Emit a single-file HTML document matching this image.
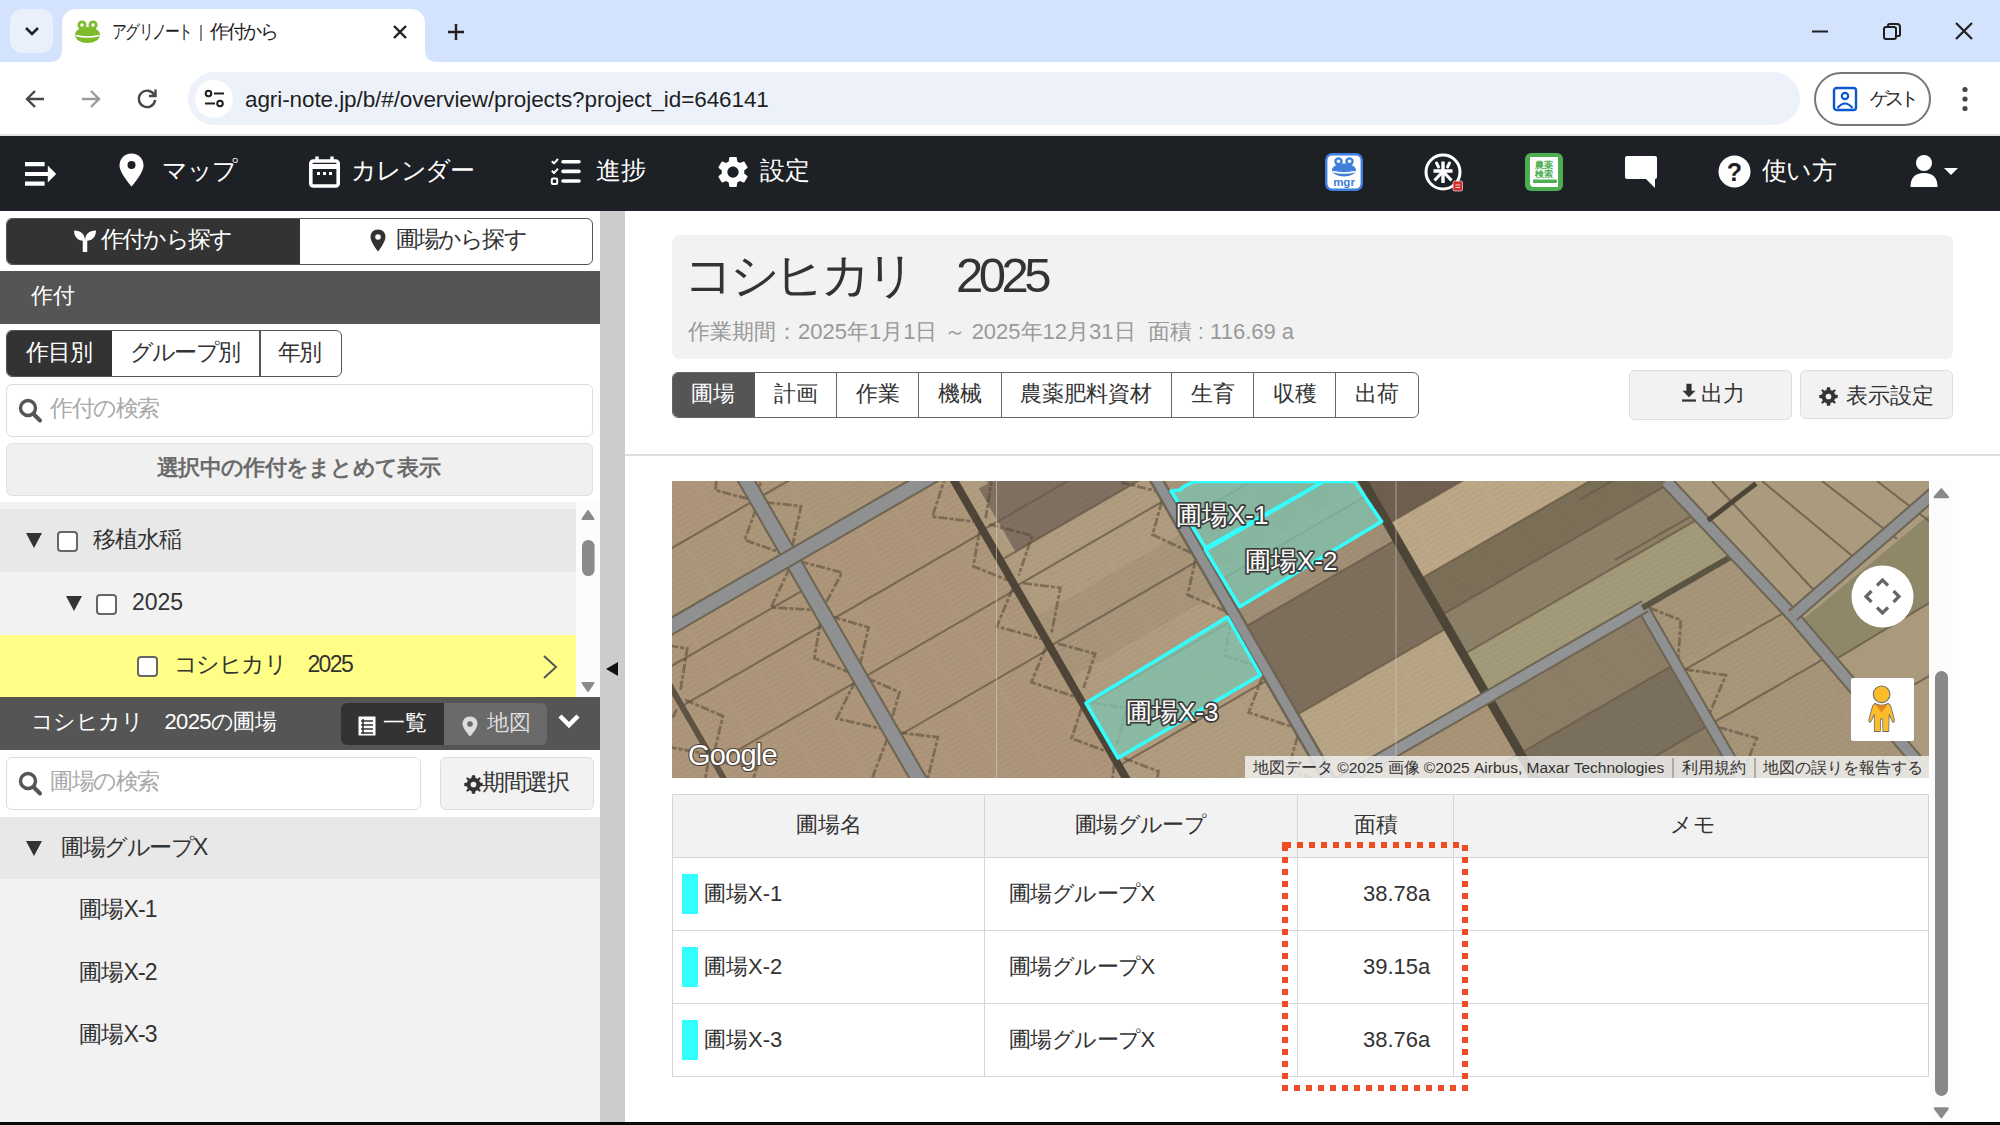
<!DOCTYPE html>
<html><head><meta charset="utf-8">
<style>
*{box-sizing:border-box;margin:0;padding:0}
html,body{width:2000px;height:1125px;overflow:hidden;background:#fff}
body{position:relative;font-family:"Liberation Sans",sans-serif;color:#333}
.a{position:absolute}
.t{position:absolute;white-space:nowrap;line-height:1}
svg{position:absolute;overflow:visible}
</style></head><body>

<!-- ============ CHROME TAB STRIP ============ -->
<div class="a" style="left:0;top:0;width:2000px;height:62px;background:#d3e3fd"></div>
<div class="a" style="left:10px;top:9px;width:43px;height:44px;border-radius:12px;background:#e9f0fc"></div>
<svg style="left:24px;top:25px" width="16" height="12"><path d="M2 3 L8 9 L14 3" stroke="#1f1f1f" stroke-width="2.6" fill="none"/></svg>
<!-- active tab -->
<div class="a" style="left:62px;top:9px;width:363px;height:60px;border-radius:14px 14px 0 0;background:#fff"></div>
<svg style="left:0;top:50px" width="500" height="14"><path d="M50 12 Q62 12 62 0 L62 12 Z" fill="#fff"/><path d="M437 12 Q425 12 425 0 L425 12 Z" fill="#fff"/></svg>
<!-- frog favicon -->
<svg style="left:74px;top:20px" width="28" height="24" viewBox="0 0 28 24">
<circle cx="8" cy="5" r="4.5" fill="#7dbb2a"/><circle cx="19" cy="5" r="4.5" fill="#7dbb2a"/>
<circle cx="8" cy="5" r="1.8" fill="#fff"/><circle cx="19" cy="5" r="1.8" fill="#fff"/>
<ellipse cx="13.5" cy="15" rx="12.5" ry="8" fill="#7dbb2a"/>
<path d="M1.5 15.5 Q13.5 18.5 25.5 15.5" stroke="#fff" stroke-width="1.6" fill="none"/>
</svg>
<div class="t" style="left:112px;top:22px;font-size:19px;color:#1f1f1f;letter-spacing:-2px;transform:scaleX(0.78);transform-origin:0 0">アグリノート</div>
<div class="a" style="left:200px;top:25px;width:1.5px;height:16px;background:#8a8a8a"></div>
<div class="t" style="left:210px;top:22px;font-size:19px;color:#1f1f1f;letter-spacing:-2.4px">作付から</div>
<svg style="left:392px;top:24px" width="16" height="16"><path d="M2 2 L14 14 M14 2 L2 14" stroke="#1f1f1f" stroke-width="2.4"/></svg>
<svg style="left:446px;top:22px" width="20" height="20"><path d="M10 2 V18 M2 10 H18" stroke="#1f1f1f" stroke-width="2.4"/></svg>
<!-- window controls -->
<svg style="left:1810px;top:22px" width="20" height="20"><path d="M2 9.5 H18" stroke="#1f1f1f" stroke-width="2"/></svg>
<svg style="left:1881px;top:21px" width="22" height="22"><rect x="3" y="6" width="12" height="12" rx="2" stroke="#1f1f1f" stroke-width="2" fill="none"/><path d="M7 6 V4.5 Q7 3 8.5 3 H16 Q19 3 19 6 V13.5 Q19 15 17.5 15 H15" stroke="#1f1f1f" stroke-width="2" fill="none"/></svg>
<svg style="left:1953px;top:20px" width="22" height="22"><path d="M3 3 L19 19 M19 3 L3 19" stroke="#1f1f1f" stroke-width="2.2"/></svg>

<!-- ============ TOOLBAR ============ -->
<div class="a" style="left:0;top:62px;width:2000px;height:73px;background:#fff;border-radius:14px 14px 0 0"></div>
<div class="a" style="left:0;top:134px;width:2000px;height:2px;background:#e3e3e3"></div>
<svg style="left:24px;top:88px" width="22" height="22"><path d="M20 11 H3 M11 3 L3 11 L11 19" stroke="#474747" stroke-width="2.4" fill="none"/></svg>
<svg style="left:80px;top:88px" width="22" height="22"><path d="M2 11 H19 M11 3 L19 11 L11 19" stroke="#9a9a9a" stroke-width="2.4" fill="none"/></svg>
<svg style="left:136px;top:88px" width="22" height="22"><path d="M18.2 6.8 A8.2 8.2 0 1 0 19.2 12" stroke="#474747" stroke-width="2.4" fill="none"/><path d="M19.5 1.5 V8 H13" stroke="#474747" stroke-width="2.4" fill="none"/></svg>
<div class="a" style="left:188px;top:72px;width:1612px;height:53px;border-radius:27px;background:#edf2fa"></div>
<div class="a" style="left:195px;top:80px;width:38px;height:38px;border-radius:19px;background:#fff"></div>
<svg style="left:204px;top:89px" width="22" height="20"><circle cx="4.5" cy="4.5" r="2.8" stroke="#1f1f1f" stroke-width="2" fill="none"/><path d="M10 4.5 H20" stroke="#1f1f1f" stroke-width="2"/><circle cx="16" cy="14.5" r="2.8" stroke="#1f1f1f" stroke-width="2" fill="none"/><path d="M1 14.5 H11" stroke="#1f1f1f" stroke-width="2"/></svg>
<div class="t" style="left:245px;top:89px;font-size:22.5px;color:#1f1f1f;letter-spacing:-0.09px">agri-note.jp/b/#/overview/projects?project_id=646141</div>
<!-- guest -->
<div class="a" style="left:1814px;top:72px;width:117px;height:54px;border-radius:27px;border:2px solid #747775;background:#fff"></div>
<svg style="left:1832px;top:86px" width="26" height="26"><rect x="2" y="2" width="22" height="22" rx="2.5" stroke="#0b57d0" stroke-width="2.4" fill="none"/><circle cx="13" cy="10" r="3.2" stroke="#0b57d0" stroke-width="2.2" fill="none"/><path d="M5.5 22 Q13 13 20.5 22" stroke="#0b57d0" stroke-width="2.2" fill="none"/></svg>
<div class="t" style="left:1870px;top:89px;font-size:19px;color:#1f1f1f;letter-spacing:-3.8px">ゲスト</div>
<svg style="left:1960px;top:86px" width="10" height="26"><circle cx="5" cy="3.5" r="2.6" fill="#474747"/><circle cx="5" cy="13" r="2.6" fill="#474747"/><circle cx="5" cy="22.5" r="2.6" fill="#474747"/></svg>

<!-- ============ NAVBAR ============ -->
<div class="a" id="nav" style="left:0;top:136px;width:2000px;height:75px;background:#1d2024"></div>
<svg style="left:24px;top:160px" width="34" height="28"><path d="M1 4.2 H20.6 M1 14 H25 M1 23.6 H20.6" stroke="#fff" stroke-width="4.2"/><path d="M23.8 5.4 L32.2 14 L23.8 22.6 Z" fill="#fff"/></svg>
<svg style="left:119px;top:153px" width="25" height="34" viewBox="0 0 25 34"><path d="M12.5 0.5 C5.5 0.5 0.5 5.5 0.5 12.5 C0.5 20 12.5 33.5 12.5 33.5 C12.5 33.5 24.5 20 24.5 12.5 C24.5 5.5 19.5 0.5 12.5 0.5 Z" fill="#fff"/><circle cx="12.5" cy="12" r="4" fill="#1d2024"/></svg>
<div class="t" style="left:162px;top:158px;font-size:25px;color:#fff;letter-spacing:-1px">マップ</div>
<svg style="left:309px;top:156px" width="31" height="32" viewBox="0 0 31 32"><rect x="1.8" y="5" width="27.4" height="25" rx="2.5" stroke="#fff" stroke-width="3.6" fill="none"/><path d="M1.8 10.5 H29.2" stroke="#fff" stroke-width="5"/><path d="M8 0.5 V6 M23 0.5 V6" stroke="#fff" stroke-width="3.4"/><rect x="8" y="16" width="3" height="3" fill="#fff"/><rect x="14" y="16" width="3" height="3" fill="#fff"/><rect x="20" y="16" width="3" height="3" fill="#fff"/></svg>
<div class="t" style="left:351px;top:158px;font-size:25px;color:#fff;letter-spacing:-1.2px">カレンダー</div>
<svg style="left:550px;top:157px" width="32" height="30" viewBox="0 0 32 30"><path d="M1.8 4.2 L4 6.4 L8 2" stroke="#fff" stroke-width="2" fill="none"/><path d="M1.8 13.8 L4 16 L8 11.6" stroke="#fff" stroke-width="2" fill="none"/><rect x="1.8" y="21.6" width="5.4" height="5.4" rx="1.2" stroke="#fff" stroke-width="2" fill="none"/><path d="M13 4.8 H29 M13 14.4 H29 M13 24 H29" stroke="#fff" stroke-width="3.6" stroke-linecap="round"/></svg>
<div class="t" style="left:596px;top:158px;font-size:25px;color:#fff">進捗</div>
<svg style="left:718px;top:157px" width="30" height="30" viewBox="2.4 2.4 19.2 19.2"><path d="M19.14,12.94c0.04-0.3,0.06-0.61,0.06-0.94c0-0.32-0.02-0.64-0.07-0.94l2.03-1.58c0.18-0.14,0.23-0.41,0.12-0.61 l-1.92-3.32c-0.12-0.22-0.37-0.29-0.59-0.22l-2.39,0.96c-0.5-0.38-1.030-0.7-1.62-0.94L14.4,2.81c-0.04-0.24-0.24-0.41-0.48-0.41 h-3.84c-0.24,0-0.43,0.17-0.47,0.41L9.25,5.35C8.66,5.59,8.12,5.92,7.63,6.29L5.24,5.33c-0.22-0.08-0.47,0-0.59,0.22L2.74,8.87 C2.62,9.08,2.66,9.34,2.86,9.48l2.03,1.58C4.84,11.36,4.8,11.69,4.8,12s0.02,0.64,0.07,0.94l-2.03,1.58 c-0.18,0.14-0.23,0.41-0.12,0.61l1.92,3.32c0.12,0.22,0.37,0.29,0.59,0.22l2.39-0.96c0.5,0.38,1.03,0.7,1.62,0.94l0.36,2.54 c0.05,0.24,0.24,0.41,0.48,0.41h3.84c0.24,0,0.44-0.17,0.47-0.41l0.36-2.54c0.59-0.24,1.13-0.56,1.62-0.94l2.39,0.96 c0.22,0.08,0.47,0,0.59-0.22l1.92-3.32c0.12-0.22,0.07-0.47-0.12-0.61L19.14,12.94z M12,15.6c-1.98,0-3.6-1.62-3.6-3.6 s1.62-3.6,3.6-3.6s3.6,1.62,3.6,3.6S13.98,15.6,12,15.6z" fill="#fff" fill-rule="evenodd"/></svg>
<div class="t" style="left:760px;top:158px;font-size:25px;color:#fff">設定</div>

<!-- right icons -->
<svg style="left:1325px;top:153px" width="38" height="38" viewBox="0 0 38 38"><rect x="1.2" y="1.2" width="35.6" height="35.6" rx="6" fill="#fff" stroke="#3d7fd9" stroke-width="2.4"/>
<circle cx="13.5" cy="8.5" r="4.2" fill="#3d7fd9"/><circle cx="24.5" cy="8.5" r="4.2" fill="#3d7fd9"/><circle cx="13.5" cy="8.3" r="1.7" fill="#fff"/><circle cx="24.5" cy="8.3" r="1.7" fill="#fff"/>
<ellipse cx="19" cy="17" rx="12" ry="6.5" fill="#3d7fd9"/><path d="M7.5 18.5 Q19 21.5 30.5 18.5" stroke="#fff" stroke-width="1.6" fill="none"/>
<text x="19" y="32.5" font-size="11.5" font-weight="bold" fill="#3d7fd9" text-anchor="middle" font-family="Liberation Sans">mgr</text></svg>
<svg style="left:1424px;top:153px" width="40" height="40" viewBox="0 0 40 40"><circle cx="19" cy="19" r="17" stroke="#fff" stroke-width="3" fill="#1d2024"/>
<path d="M19 8.5 V30 M9.5 18 H28.5" stroke="#fff" stroke-width="3.4"/><path d="M12.5 10 L14.5 14 M25.5 10 L23.5 14" stroke="#fff" stroke-width="3" stroke-linecap="round"/><path d="M18 19.5 L10.5 27.5 M20 19.5 L27.5 27.5" stroke="#fff" stroke-width="3.2"/>
<rect x="29" y="28" width="9.5" height="10" rx="1.5" fill="#d32f2f" stroke="#fff" stroke-width="0.6"/><path d="M31.5 32 H36 M31.5 34.5 H36" stroke="#fff" stroke-width="0.8"/></svg>
<svg style="left:1525px;top:153px" width="38" height="38" viewBox="0 0 38 38"><rect x="0" y="0" width="38" height="38" rx="6" fill="#4caf50"/>
<path d="M5 4 H33 V34 H9 Q5 34 5 30 Z" fill="#fff"/><rect x="8" y="26.5" width="24" height="3.6" rx="1" fill="#4caf50"/>
<text x="19" y="14.5" font-size="9" font-weight="bold" fill="#4caf50" text-anchor="middle">農薬</text><text x="19" y="24" font-size="9" font-weight="bold" fill="#4caf50" text-anchor="middle">検索</text></svg>
<svg style="left:1624px;top:155px" width="34" height="34" viewBox="0 0 34 34"><path d="M3 1 H31 Q33 1 33 3 V22 Q33 24 31 24 V33 L22 24 H3 Q1 24 1 22 V3 Q1 1 3 1 Z" fill="#fff"/></svg>
<svg style="left:1718px;top:155px" width="33" height="33" viewBox="0 0 33 33"><circle cx="16.5" cy="16.5" r="16" fill="#fff"/><text x="16.5" y="26" font-size="25" font-weight="bold" fill="#1d2024" text-anchor="middle" font-family="Liberation Sans">?</text></svg>
<div class="t" style="left:1762px;top:158px;font-size:25px;color:#fff;letter-spacing:-0.7px">使い方</div>
<svg style="left:1910px;top:154px" width="50" height="34" viewBox="0 0 50 34"><circle cx="14" cy="9" r="8" fill="#fff"/><path d="M0.5 33 Q0.5 19 14 19 Q27.5 19 27.5 33 Z" fill="#fff"/><path d="M34 14 L48 14 L41 21 Z" fill="#fff"/></svg>


<!-- ============ LEFT PANEL ============ -->
<div class="a" style="left:0;top:211px;width:600px;height:914px;background:#fff"></div>
<!-- toggle -->
<div class="a" style="left:6px;top:218px;width:587px;height:47px;border:1.5px solid #555;border-radius:6px;background:#fff;overflow:hidden">
  <div class="a" style="left:0;top:0;width:293px;height:100%;background:#333"></div>
</div>
<svg style="left:73px;top:228px" width="24" height="25" viewBox="0 0 24 25"><path d="M12 24 V12" stroke="#fff" stroke-width="4.5"/><path d="M12 13 C12 6 8 2.5 1 2.5 C1 9 5 13 12 13 Z" fill="#fff"/><path d="M12 13 C12 6 16 2.5 23 2.5 C23 9 19 13 12 13 Z" fill="#fff"/></svg>
<div class="t" style="left:101px;top:228px;font-size:23px;color:#fff;letter-spacing:-1.8px">作付から探す</div>
<svg style="left:370px;top:229px" width="16" height="23" viewBox="0 0 16 23"><path d="M8 0.5 C3.5 0.5 0.5 3.5 0.5 8 C0.5 13 8 22.5 8 22.5 C8 22.5 15.5 13 15.5 8 C15.5 3.5 12.5 0.5 8 0.5 Z" fill="#333"/><circle cx="8" cy="8" r="2.8" fill="#fff"/></svg>
<div class="t" style="left:396px;top:228px;font-size:23px;color:#333;letter-spacing:-1.9px">圃場から探す</div>

<!-- header 作付 -->
<div class="a" style="left:0;top:271px;width:600px;height:53px;background:#555"></div>
<div class="t" style="left:31px;top:285px;font-size:22px;color:#fff">作付</div>

<!-- segmented -->
<div class="a" style="left:6px;top:330px;width:336px;height:47px;border:1.5px solid #555;border-radius:6px;background:#fff;overflow:hidden">
  <div class="a" style="left:0;top:0;width:105px;height:100%;background:#333"></div>
  <div class="a" style="left:252px;top:0;width:1.5px;height:100%;background:#555"></div>
</div>
<div class="t" style="left:26px;top:341px;font-size:23px;color:#fff;letter-spacing:-1.1px">作目別</div>
<div class="t" style="left:130px;top:341px;font-size:23px;color:#333;letter-spacing:-1.8px">グループ別</div>
<div class="t" style="left:278px;top:341px;font-size:23px;color:#333;letter-spacing:-2px">年別</div>

<!-- search -->
<div class="a" style="left:6px;top:384px;width:587px;height:53px;border:1.5px solid #ddd;border-radius:6px;background:#fff"></div>
<svg style="left:18px;top:398px" width="24" height="25" viewBox="0 0 24 25"><circle cx="10" cy="10" r="7.5" stroke="#555" stroke-width="3.4" fill="none"/><path d="M15.5 16 L22 22.5" stroke="#555" stroke-width="4" stroke-linecap="round"/></svg>
<div class="t" style="left:50px;top:397px;font-size:23px;color:#aaa;letter-spacing:-1.4px">作付の検索</div>

<!-- gray button -->
<div class="a" style="left:6px;top:443px;width:587px;height:53px;border:1.5px solid #e0e0e0;border-radius:6px;background:#f0f0f0"></div>
<div class="t" style="left:157px;top:457px;font-size:22px;font-weight:bold;color:#6b6b6b;letter-spacing:-0.7px">選択中の作付をまとめて表示</div>

<!-- tree list -->
<div class="a" style="left:0;top:502px;width:600px;height:195px;background:#f2f2f2"></div>
<div class="a" style="left:0;top:509px;width:576px;height:63px;background:#e8e8e8"></div>
<div class="a" style="left:0;top:635px;width:576px;height:62px;background:#ffff88"></div>
<div class="a" style="left:576px;top:502px;width:24px;height:195px;background:#fcfcfc"></div>
<svg style="left:578px;top:506px" width="20" height="190"><path d="M4.5 13 L10 5 L15.5 13 Z" fill="#8a8a8a" stroke="#8a8a8a" stroke-width="2" stroke-linejoin="round"/><rect x="4" y="34" width="12.6" height="36" rx="6.3" fill="#8a8a8a"/><path d="M4.5 177 L10 185 L15.5 177 Z" fill="#8a8a8a" stroke="#8a8a8a" stroke-width="2" stroke-linejoin="round"/></svg>
<svg style="left:25px;top:532px" width="18" height="17"><path d="M1 1 H17 L9 16 Z" fill="#333"/></svg>
<div class="a" style="left:57px;top:531px;width:21px;height:21px;border:2px solid #666;border-radius:4px;background:#fff"></div>
<div class="t" style="left:93px;top:528px;font-size:23px;color:#333;letter-spacing:-1px">移植水稲</div>
<svg style="left:65px;top:595px" width="18" height="17"><path d="M1 1 H17 L9 16 Z" fill="#333"/></svg>
<div class="a" style="left:96px;top:594px;width:21px;height:21px;border:2px solid #666;border-radius:4px;background:#fff"></div>
<div class="t" style="left:132px;top:591px;font-size:23px;color:#333">2025</div>
<div class="a" style="left:137px;top:656px;width:21px;height:21px;border:2px solid #666;border-radius:4px;background:#fff"></div>
<div class="t" style="left:174px;top:653px;font-size:23px;color:#333;letter-spacing:-1.6px">コシヒカリ　2025</div>
<svg style="left:542px;top:654px" width="16" height="26"><path d="M2 2 L14 13 L2 24" stroke="#555" stroke-width="2" fill="none"/></svg>

<!-- header 2 -->
<div class="a" style="left:0;top:697px;width:600px;height:53px;background:#555"></div>
<div class="t" style="left:31px;top:711px;font-size:22px;color:#fff;letter-spacing:-0.6px">コシヒカリ　2025の圃場</div>
<div class="a" style="left:341px;top:703px;width:206px;height:42px;border-radius:6px;background:#6a6a6a;overflow:hidden"><div class="a" style="left:0;top:0;width:103px;height:42px;background:#333"></div></div>
<svg style="left:358px;top:716px" width="18" height="20" viewBox="0 0 18 20"><rect x="0.5" y="0.5" width="17" height="19" fill="#fff"/><path d="M3 5 H15 M3 9 H15 M3 13 H15 M3 17 H15" stroke="#333" stroke-width="1.5"/><path d="M5 3 V18" stroke="#333" stroke-width="1.5"/></svg>
<div class="t" style="left:383px;top:712px;font-size:22px;color:#fff">一覧</div>
<svg style="left:462px;top:716px" width="16" height="21" viewBox="0 0 16 21"><path d="M8 0.5 C3.5 0.5 0.5 3.5 0.5 8 C0.5 12.5 8 20.5 8 20.5 C8 20.5 15.5 12.5 15.5 8 C15.5 3.5 12.5 0.5 8 0.5 Z" fill="#ddd"/><circle cx="8" cy="8" r="2.8" fill="#6a6a6a"/></svg>
<div class="t" style="left:487px;top:712px;font-size:22px;color:#ddd">地図</div>
<svg style="left:558px;top:713px" width="22" height="16"><path d="M2 3 L11 12 L20 3" stroke="#fff" stroke-width="4.5" fill="none"/></svg>

<!-- field search -->
<div class="a" style="left:6px;top:757px;width:415px;height:53px;border:1.5px solid #ddd;border-radius:6px;background:#fff"></div>
<svg style="left:18px;top:771px" width="24" height="25" viewBox="0 0 24 25"><circle cx="10" cy="10" r="7.5" stroke="#555" stroke-width="3.4" fill="none"/><path d="M15.5 16 L22 22.5" stroke="#555" stroke-width="4" stroke-linecap="round"/></svg>
<div class="t" style="left:50px;top:770px;font-size:23px;color:#aaa;letter-spacing:-1.4px">圃場の検索</div>
<div class="a" style="left:440px;top:757px;width:154px;height:53px;border:1.5px solid #ddd;border-radius:6px;background:#f2f2f2"></div>
<svg style="left:464px;top:775px" width="19" height="19" viewBox="-16 -16 32 32"><path d="M-2.6 -15.5 H2.6 L3.4 -11 L6.6 -9.6 L10.4 -12.4 L12.4 -10.4 L9.6 -6.6 L11 -3.4 L15.5 -2.6 V2.6 L11 3.4 L9.6 6.6 L12.4 10.4 L10.4 12.4 L6.6 9.6 L3.4 11 L2.6 15.5 H-2.6 L-3.4 11 L-6.6 9.6 L-10.4 12.4 L-12.4 10.4 L-9.6 6.6 L-11 3.4 L-15.5 2.6 V-2.6 L-11 -3.4 L-9.6 -6.6 L-12.4 -10.4 L-10.4 -12.4 L-6.6 -9.6 L-3.4 -11 Z" fill="#333"/><circle r="4.8" fill="#f2f2f2"/></svg>
<div class="t" style="left:482px;top:771px;font-size:23px;color:#333;letter-spacing:-1.4px">期間選択</div>

<!-- field group -->
<div class="a" style="left:0;top:817px;width:600px;height:308px;background:#f2f2f2"></div>
<div class="a" style="left:0;top:817px;width:600px;height:62px;background:#e8e8e8"></div>
<svg style="left:25px;top:840px" width="18" height="17"><path d="M1 1 H17 L9 16 Z" fill="#333"/></svg>
<div class="t" style="left:61px;top:836px;font-size:23px;color:#333;letter-spacing:-1.5px">圃場グループX</div>
<div class="t" style="left:79px;top:898px;font-size:23px;color:#333;letter-spacing:-0.8px">圃場X-1</div>
<div class="t" style="left:79px;top:961px;font-size:23px;color:#333;letter-spacing:-0.8px">圃場X-2</div>
<div class="t" style="left:79px;top:1023px;font-size:23px;color:#333;letter-spacing:-0.8px">圃場X-3</div>

<!-- gutter -->
<div class="a" style="left:600px;top:211px;width:25px;height:914px;background:#ccc"></div>
<svg style="left:604px;top:661px" width="16" height="16"><path d="M14 1 V15 L2 8 Z" fill="#111"/></svg>


<!-- ============ MAIN ============ -->
<div class="a" style="left:672px;top:235px;width:1281px;height:124px;border-radius:7px;background:#f2f2f2"></div>
<div class="t" style="left:684px;top:251px;font-size:49px;color:#333;letter-spacing:-4.5px">コシヒカリ　2025</div>
<div class="t" style="left:688px;top:321px;font-size:22px;color:#999">作業期間：2025年1月1日 ～ 2025年12月31日&nbsp;&nbsp;面積 : 116.69 a</div>

<!-- tabs -->
<div class="a" style="left:672px;top:372px;width:747px;height:46px;border:1.5px solid #666;border-radius:6px;background:#fff;overflow:hidden">
  <div class="a" style="left:0;top:0;width:82px;height:100%;background:#555"></div>
  <div class="a" style="left:163px;top:0;width:1px;height:100%;background:#666"></div>
  <div class="a" style="left:245px;top:0;width:1px;height:100%;background:#666"></div>
  <div class="a" style="left:328px;top:0;width:1px;height:100%;background:#666"></div>
  <div class="a" style="left:498px;top:0;width:1px;height:100%;background:#666"></div>
  <div class="a" style="left:580px;top:0;width:1px;height:100%;background:#666"></div>
  <div class="a" style="left:662px;top:0;width:1px;height:100%;background:#666"></div>
</div>
<div class="t" style="left:691px;top:383px;font-size:22px;color:#fff">圃場</div>
<div class="t" style="left:774px;top:383px;font-size:22px;color:#333">計画</div>
<div class="t" style="left:856px;top:383px;font-size:22px;color:#333">作業</div>
<div class="t" style="left:938px;top:383px;font-size:22px;color:#333">機械</div>
<div class="t" style="left:1020px;top:383px;font-size:22px;color:#333">農薬肥料資材</div>
<div class="t" style="left:1191px;top:383px;font-size:22px;color:#333">生育</div>
<div class="t" style="left:1273px;top:383px;font-size:22px;color:#333">収穫</div>
<div class="t" style="left:1355px;top:383px;font-size:22px;color:#333">出荷</div>

<!-- right buttons -->
<div class="a" style="left:1629px;top:370px;width:163px;height:50px;border:1.5px solid #ddd;border-radius:6px;background:#f2f2f2"></div>
<svg style="left:1681px;top:383px" width="16" height="19" viewBox="0 0 18 22"><path d="M6 1 H12 V9 H16.5 L9 16.5 L1.5 9 H6 Z" fill="#333"/><rect x="1" y="19" width="16" height="2.6" fill="#333"/></svg>
<div class="t" style="left:1701px;top:383px;font-size:22px;color:#333">出力</div>
<div class="a" style="left:1800px;top:370px;width:153px;height:49px;border:1.5px solid #ddd;border-radius:6px;background:#f2f2f2"></div>
<svg style="left:1819px;top:387px" width="19" height="19" viewBox="-16 -16 32 32"><path d="M-2.6 -15.5 H2.6 L3.4 -11 L6.6 -9.6 L10.4 -12.4 L12.4 -10.4 L9.6 -6.6 L11 -3.4 L15.5 -2.6 V2.6 L11 3.4 L9.6 6.6 L12.4 10.4 L10.4 12.4 L6.6 9.6 L3.4 11 L2.6 15.5 H-2.6 L-3.4 11 L-6.6 9.6 L-10.4 12.4 L-12.4 10.4 L-9.6 6.6 L-11 3.4 L-15.5 2.6 V-2.6 L-11 -3.4 L-9.6 -6.6 L-12.4 -10.4 L-10.4 -12.4 L-6.6 -9.6 L-3.4 -11 Z" fill="#333"/><circle r="4.8" fill="#f2f2f2"/></svg>
<div class="t" style="left:1846px;top:385px;font-size:22px;color:#333">表示設定</div>

<!-- hr -->
<div class="a" style="left:625px;top:454px;width:1375px;height:2px;background:#ddd"></div>

<!-- MAP -->
<div class="a" id="map" style="left:672px;top:481px;width:1257px;height:297px;overflow:hidden;background:#a8977c">
<svg style="left:0;top:0" width="1257" height="297" viewBox="0 0 1257 297">
<defs><clipPath id="mc"><rect width="1257" height="297"/></clipPath>
<pattern id="stripes" width="40" height="5" patternUnits="userSpaceOnUse"><rect width="40" height="5" fill="none"/><path d="M0 1 H18 M22 3.5 H40" stroke="#3d3025" stroke-width="1" opacity="0.35"/></pattern></defs>
<g clip-path="url(#mc)">
<rect width="1257" height="297" fill="#a99378"/>
<g transform="rotate(-30)">
 <!-- col1 / col2 rows -->
 <rect x="-300" y="-100" width="547" height="1000" fill="#ad967a"/>
 <rect x="-300" y="58" width="547" height="67" fill="#ab977a"/>
 <!-- col3 -->
 <rect x="247" y="-100" width="173" height="1000" fill="#b09c7f"/>
 <rect x="262" y="160" width="158" height="73" fill="#807062"/>
 <rect x="247" y="300" width="173" height="70" fill="#a8957a"/>
 <!-- col4 -->
 <rect x="420" y="-100" width="178" height="1000" fill="#a89579"/>
 <rect x="420" y="290" width="178" height="60" fill="#9f8c72"/>
 <rect x="420" y="360" width="178" height="53" fill="#a08e75"/>
 <rect x="420" y="413" width="178" height="102" fill="#7d6f5c"/>
 <rect x="420" y="515" width="178" height="80" fill="#b8a586"/>
 <rect x="420" y="600" width="178" height="300" fill="#a99477"/>
 <!-- col6 -->
 <rect x="777" y="-100" width="400" height="1000" fill="#a69579"/>
 <rect x="777" y="660" width="400" height="70" fill="#a99779"/>
 <!-- col5 -->
 <rect x="598" y="-100" width="300" height="448" fill="#9a8a70"/>
 <rect x="598" y="348" width="300" height="47" fill="#6e5f51"/>
 <rect x="598" y="395" width="300" height="64" fill="#bca887"/>
 <rect x="598" y="459" width="300" height="42" fill="#7b6f58"/>
 <rect x="598" y="501" width="300" height="45" fill="#8c8168"/>
 <rect x="598" y="546" width="300" height="49" fill="#a39a79"/>
 <rect x="598" y="600" width="179" height="60" fill="#8d7f67"/>
 <rect x="598" y="660" width="179" height="70" fill="#7b6f5d"/>
 <rect x="598" y="730" width="179" height="200" fill="#8a7c65"/>
 <rect x="-300" y="-300" width="1500" height="1300" fill="url(#stripes)" opacity="0.22"/>
 <!-- field lines -->
 <g stroke="#6b5b48" stroke-width="2" opacity="0.8">
  <path d="M-300 58 H247 M-104 200 H247 M-104 266 H247 M64 334 H247 M-200 160 H64"/>
  <path d="M247 198 H420 M247 233 H420 M247 263 H420 M247 332 H420 M247 401 H420 M247 470 H420 M247 90 H420"/>
  <path d="M420 413 H598 M420 515 H598 M420 360 H598 M420 290 H598 M420 660 H598"/>
  <path d="M598 395 H898 M598 459 H898 M598 501 H898 M598 546 H898 M598 660 H777 M598 730 H777"/>
  <path d="M777 470 H1100 M777 540 H1100 M777 670 H1100 M777 730 H1100"/>
 </g>
<g stroke="#4f4030" stroke-width="2.8" fill="none" opacity="0.5" stroke-dasharray="9 2 4 2">
 <path d="M-98.0 -5.1 L-68.0 27.4 L-98.0 54.1 M-110.0 -6.1 L-141.9 29.6 L-110.0 55.1 M-98.0 60.9 L-77.5 96.3 L-98.0 122.1 M-110.0 63.0 L-137.4 86.9 L-110.0 120.0 M-98.0 130.7 L-70.5 152.7 L-98.0 186.3 M-110.0 130.5 L-133.9 155.1 L-110.0 186.5 M-98.0 196.1 L-73.5 229.1 L-98.0 254.9 M-110.0 200.4 L-144.7 221.2 L-110.0 250.6 M-98.0 268.5 L-68.1 289.0 L-98.0 316.5 M-110.0 262.4 L-132.0 289.1 L-110.0 322.6 M-98.0 333.5 L-62.3 360.0 L-98.0 385.5 M-110.0 328.8 L-144.0 361.6 L-110.0 390.2 M-98.0 397.7 L-74.7 431.2 L-98.0 455.3 M-110.0 395.7 L-145.1 424.1 L-110.0 457.3 M-98.0 468.5 L-72.2 491.1 L-98.0 518.5 M-110.0 469.0 L-132.7 494.7 L-110.0 518.0 M-98.0 534.1 L-77.9 564.3 L-98.0 586.9 M-110.0 534.3 L-140.8 560.3 L-110.0 586.7 M-98.0 598.6 L-72.9 633.2 L-98.0 656.4 M-110.0 603.1 L-137.7 621.8 L-110.0 651.9 M-98.0 670.4 L-66.0 692.9 L-98.0 718.6 M-110.0 665.0 L-143.5 695.4 L-110.0 724.0 M-98.0 736.2 L-77.9 757.9 L-98.0 786.8 M-110.0 730.8 L-130.7 764.6 L-110.0 792.2 M-98.0 802.1 L-63.1 828.8 L-98.0 854.9 M-110.0 802.0 L-145.1 831.8 L-110.0 855.0 M-98.0 865.9 L-76.3 889.9 L-98.0 925.1 M-110.0 865.5 L-142.0 900.8 L-110.0 925.5 M70.5 -3.8 L92.0 22.6 L70.5 52.8 M58.5 -5.9 L33.0 29.6 L58.5 54.9 M70.5 65.3 L99.2 86.4 L70.5 117.7 M58.5 66.3 L33.5 87.3 L58.5 116.7 M70.5 133.4 L101.5 164.3 L70.5 183.6 M58.5 134.2 L22.6 158.9 L58.5 182.8 M70.5 197.3 L97.0 225.0 L70.5 253.7 M58.5 195.7 L34.7 224.6 L58.5 255.3 M70.5 268.3 L91.4 296.6 L70.5 316.7 M58.5 265.0 L23.8 288.1 L58.5 320.0 M70.5 331.1 L102.2 354.8 L70.5 387.9 M58.5 330.0 L23.3 358.7 L58.5 389.0 M70.5 400.4 L92.9 432.5 L70.5 452.6 M58.5 399.3 L25.0 430.7 L58.5 453.7 M70.5 466.1 L106.1 493.2 L70.5 520.9 M58.5 464.4 L31.2 491.0 L58.5 522.6 M70.5 533.9 L97.0 566.0 L70.5 587.1 M58.5 529.6 L36.2 562.0 L58.5 591.4 M70.5 602.9 L98.5 630.9 L70.5 652.1 M58.5 601.6 L33.1 631.9 L58.5 653.4 M70.5 665.1 L96.3 696.5 L70.5 723.9 M58.5 665.6 L25.9 697.6 L58.5 723.4 M70.5 735.5 L96.3 764.7 L70.5 787.5 M58.5 734.1 L27.2 763.8 L58.5 788.9 M70.5 800.0 L95.2 822.6 L70.5 857.0 M58.5 800.4 L23.4 829.1 L58.5 856.6 M70.5 868.3 L94.5 897.3 L70.5 922.7 M58.5 865.8 L27.8 899.1 L58.5 925.2 M253.0 -4.7 L278.6 22.7 L253.0 53.7 M241.0 -5.3 L210.7 28.6 L241.0 54.3 M253.0 60.7 L286.9 91.7 L253.0 122.3 M241.0 60.8 L210.0 91.9 L241.0 122.2 M253.0 127.9 L275.7 160.8 L253.0 189.1 M241.0 131.2 L207.6 161.1 L241.0 185.8 M253.0 196.0 L284.7 227.5 L253.0 255.0 M241.0 197.4 L218.3 224.5 L241.0 253.6 M253.0 264.0 L283.0 286.8 L253.0 321.0 M241.0 263.5 L208.6 288.4 L241.0 321.5 M253.0 334.0 L280.1 361.1 L253.0 385.0 M241.0 330.7 L210.6 354.0 L241.0 388.3 M253.0 402.1 L280.5 424.3 L253.0 450.9 M241.0 401.6 L217.4 422.7 L241.0 451.4 M253.0 466.2 L276.1 494.8 L253.0 520.8 M241.0 466.8 L220.4 494.6 L241.0 520.2 M253.0 536.5 L276.8 557.8 L253.0 584.5 M241.0 533.7 L206.5 559.4 L241.0 587.3 M253.0 600.9 L274.8 628.9 L253.0 654.1 M241.0 603.2 L207.7 622.6 L241.0 651.8 M253.0 666.4 L281.7 698.3 L253.0 722.6 M241.0 663.8 L215.6 693.5 L241.0 725.2 M253.0 734.9 L286.0 762.7 L253.0 788.1 M241.0 736.5 L210.7 762.3 L241.0 786.5 M253.0 800.2 L288.3 833.2 L253.0 856.8 M241.0 802.0 L205.5 822.5 L241.0 855.0 M253.0 867.2 L274.7 897.1 L253.0 923.8 M241.0 870.5 L211.9 900.2 L241.0 920.5 M414.0 -1.5 L387.1 30.2 L414.0 50.5 M414.0 63.3 L378.6 88.6 L414.0 119.7 M414.0 132.3 L386.1 164.3 L414.0 184.7 M414.0 200.6 L389.4 227.0 L414.0 250.4 M414.0 262.7 L389.3 286.7 L414.0 322.3 M414.0 330.0 L389.6 356.4 L414.0 389.0 M414.0 400.4 L391.5 427.8 L414.0 452.6 M414.0 464.3 L383.7 488.9 L414.0 522.7 M414.0 534.1 L389.2 558.1 L414.0 586.9 M414.0 598.3 L386.6 628.6 L414.0 656.7 M414.0 664.1 L390.0 699.2 L414.0 724.9 M414.0 734.5 L393.8 762.4 L414.0 788.5 M414.0 798.1 L383.9 827.1 L414.0 858.9 M414.0 869.4 L380.4 899.5 L414.0 921.6 M783.0 598.6 L804.1 624.9 L783.0 656.4 M783.0 669.5 L815.5 695.1 L783.0 719.5 M783.0 736.4 L811.0 765.2 L783.0 786.6 M783.0 798.8 L804.1 830.5 L783.0 858.2 M783.0 864.6 L803.4 897.9 L783.0 926.4"/>
</g>
 <!-- roads NW-SE -->
 <rect x="-107" y="-300" width="6" height="1300" fill="#5d5344"/>
 <rect x="56" y="-300" width="17" height="1300" fill="#6d6452"/>
 <rect x="58" y="-300" width="13" height="1300" fill="#8f9092"/>
 <rect x="240.5" y="-300" width="8" height="1300" fill="#4e4538"/>
 <rect x="413" y="-300" width="14" height="1300" fill="#6d6452"/>
 <rect x="415.5" y="-300" width="9" height="1300" fill="#8f9092"/>
 <rect x="594" y="-300" width="9" height="1300" fill="#4d4537"/>
 <rect x="771" y="595" width="13" height="400" fill="#6d6452"/>
 <rect x="773" y="595" width="9" height="400" fill="#8f9092"/>
 <!-- roads SW-NE -->
 <rect x="-300" y="117" width="560" height="17" fill="#6d6452"/>
 <rect x="-300" y="119" width="560" height="13" fill="#8f9092"/>
 <rect x="420" y="588" width="360" height="14" fill="#6d6452"/>
 <rect x="420" y="590" width="360" height="10" fill="#929395"/>
 <rect x="777" y="592" width="120" height="6" fill="#5a5443"/>
</g>
<!-- right of road H -->
<path d="M994 0 L1120.7 134.6 L1257 292 L1257 0 Z" fill="#aa9a7e"/>
<path d="M1128 141 L1257 34 L1257 122 L1156 183 Z" fill="#8e8869"/>
<path d="M1156 183 L1257 122 L1257 200 L1192 230 Z" fill="#a99a7c"/>
<g stroke="#5e5040" stroke-width="2" opacity="0.7" fill="none">
 <path d="M1040 0 L1150 118 M1090 0 L1190 83 M1150 0 L1225 58 M1205 0 L1257 40 M1156 183 L1257 122 M1192 232 L1257 195"/>
</g>
<!-- right diagonal roads -->
<path d="M994 0 L1120.7 134.6 L1245 280" stroke="#6d6452" stroke-width="14" fill="none"/>
<path d="M994 0 L1120.7 134.6 L1245 280" stroke="#8f9092" stroke-width="10" fill="none"/>
<path d="M1120.7 134.6 L1270 5" stroke="#6d6452" stroke-width="14" fill="none"/>
<path d="M1120.7 134.6 L1270 5" stroke="#8f9092" stroke-width="10" fill="none"/>
<path d="M1036 39.6 L1084 2.6" stroke="#4d4537" stroke-width="5"/>
<!-- tile seams -->
<path d="M324.5 0 V297 M724 0 V297" stroke="#d8d0c0" stroke-width="1" opacity="0.6"/>
<!-- polygons -->
<g fill="#7fc4b0" fill-opacity="0.75" stroke="#33ffff" stroke-width="3.5" stroke-linejoin="round">
 <path d="M499 10 L508 9 L511 6 L522 0.5 L651.5 0.5 L533.5 67 Z"/>
 <path d="M533.5 69 L651.5 0.5 L682.5 0.5 L709.6 40.5 L567.6 125.7 Z"/>
 <path d="M414 222 L555.5 136 L588.5 194 L446 277 Z"/>
</g>
<!-- labels -->
<g font-family="Liberation Sans" font-size="26" fill="#fff" stroke="#3a3a3a" stroke-width="3.4" stroke-linejoin="round" paint-order="stroke" letter-spacing="0">
 <text x="504" y="43">圃場X-1</text>
 <text x="573" y="89">圃場X-2</text>
 <text x="454" y="240">圃場X-3</text>
</g>
<!-- google logo -->
<text x="16" y="284" font-family="Liberation Sans" font-size="29" fill="#fff" stroke="#4a4036" stroke-width="2.2" paint-order="stroke" letter-spacing="-0.8">Google</text>
<!-- attribution -->
<rect x="573" y="275" width="684" height="22" fill="#f5f5f5" fill-opacity="0.8"/>
<path d="M1001 277 V297 M1083 277 V297" stroke="#999" stroke-width="1.5"/>
<g font-family="Liberation Sans" font-size="16" fill="#333">
 <text x="581" y="292" font-size="15.5">地図データ ©2025 画像 ©2025 Airbus, Maxar Technologies</text>
 <text x="1010" y="292">利用規約</text>
 <text x="1091" y="292">地図の誤りを報告する</text>
</g>
<!-- fullscreen btn -->
<circle cx="1210.5" cy="115.5" r="31" fill="#fff"/>
<path d="M1205 104.5 L1210.5 99 L1216 104.5 M1205 126.5 L1210.5 132 L1216 126.5 M1199.5 110 L1194 115.5 L1199.5 121 M1221.5 110 L1227 115.5 L1221.5 121" stroke="#666" stroke-width="3.2" fill="none"/>
<!-- pegman -->
<rect x="1179" y="197" width="63" height="63" rx="2" fill="#fff"/>
<g fill="#fdbd2b" stroke="#6f6f6f" stroke-width="1.1" stroke-linejoin="round">
 <path transform="translate(1209.6 0) scale(0.76 1) translate(-1209.6 0)" d="M1201 222.5 Q1209.6 226 1218.2 222.5 Q1221.5 223.5 1222.5 227.5 L1226.5 239 Q1226.5 241.5 1224 241 L1219.5 233.5 L1219 250.5 L1211.3 250.5 L1211 238 L1208.2 238 L1207.9 250.5 L1200.2 250.5 L1199.8 233.5 L1195.2 241 Q1192.8 241.5 1192.8 239 L1196.8 227.5 Q1197.8 223.5 1201 222.5 Z"/>
 <circle cx="1209.6" cy="213.3" r="8.3"/>
</g>
<path d="M1203.5 223.5 L1209.6 231.5 L1215.7 223.5 Q1209.6 225.5 1203.5 223.5 Z" fill="#e8841e"/>
</g>
</svg>

</div>

<!-- right scrollbar -->
<div class="a" style="left:1931px;top:481px;width:22px;height:644px;background:#fcfcfc"></div>
<svg style="left:1931px;top:484px" width="20" height="16"><path d="M3.8 13 L10.3 5.5 L16.8 13 Z" fill="#8a8a8a" stroke="#8a8a8a" stroke-width="2.4" stroke-linejoin="round"/></svg>
<div class="a" style="left:1935px;top:671px;width:13px;height:425px;border-radius:6.5px;background:#888"></div>
<svg style="left:1931px;top:1104px" width="20" height="18"><path d="M4 4.5 L10.4 13 L16.6 4.5 Z" fill="#8a8a8a" stroke="#8a8a8a" stroke-width="2.4" stroke-linejoin="round"/></svg>

<!-- TABLE -->
<div class="a" style="left:672px;top:794px;width:1257px;height:283px;border:1px solid #d6d6d6;background:#fff"></div>
<div class="a" style="left:673px;top:795px;width:1255px;height:62px;background:#f2f2f2"></div>
<div class="a" style="left:672px;top:857px;width:1257px;height:1px;background:#d6d6d6"></div>
<div class="a" style="left:672px;top:930px;width:1257px;height:1px;background:#d6d6d6"></div>
<div class="a" style="left:672px;top:1003px;width:1257px;height:1px;background:#d6d6d6"></div>
<div class="a" style="left:984px;top:794px;width:1px;height:283px;background:#d6d6d6"></div>
<div class="a" style="left:1297px;top:794px;width:1px;height:283px;background:#d6d6d6"></div>
<div class="a" style="left:1453px;top:794px;width:1px;height:283px;background:#d6d6d6"></div>
<div class="t" style="left:796px;top:814px;font-size:22px;color:#333">圃場名</div>
<div class="t" style="left:1075px;top:814px;font-size:22px;color:#333;letter-spacing:-0.7px">圃場グループ</div>
<div class="t" style="left:1354px;top:814px;font-size:22px;color:#333">面積</div>
<div class="t" style="left:1670px;top:814px;font-size:22px;color:#333">メモ</div>

<div class="a" style="left:682px;top:874px;width:16px;height:40px;background:#33ffff"></div>
<div class="a" style="left:682px;top:947px;width:16px;height:40px;background:#33ffff"></div>
<div class="a" style="left:682px;top:1020px;width:16px;height:40px;background:#33ffff"></div>
<div class="t" style="left:704px;top:883px;font-size:22px;color:#333">圃場X-1</div>
<div class="t" style="left:704px;top:956px;font-size:22px;color:#333">圃場X-2</div>
<div class="t" style="left:704px;top:1029px;font-size:22px;color:#333">圃場X-3</div>
<div class="t" style="left:1009px;top:883px;font-size:22px;color:#333;letter-spacing:-0.6px">圃場グループX</div>
<div class="t" style="left:1009px;top:956px;font-size:22px;color:#333;letter-spacing:-0.6px">圃場グループX</div>
<div class="t" style="left:1009px;top:1029px;font-size:22px;color:#333;letter-spacing:-0.6px">圃場グループX</div>
<div class="t" style="left:1363px;top:883px;font-size:22px;color:#333">38.78a</div>
<div class="t" style="left:1363px;top:956px;font-size:22px;color:#333">39.15a</div>
<div class="t" style="left:1363px;top:1029px;font-size:22px;color:#333">38.76a</div>

<!-- red dotted box -->
<svg style="left:1280px;top:840px" width="190" height="252"><rect x="5" y="5" width="180" height="243" fill="none" stroke="#f04b23" stroke-width="6" stroke-dasharray="6 6"/></svg>


<div class="a" style="left:0;top:1122px;width:2000px;height:3px;background:#0a0a0a"></div>
</body></html>
